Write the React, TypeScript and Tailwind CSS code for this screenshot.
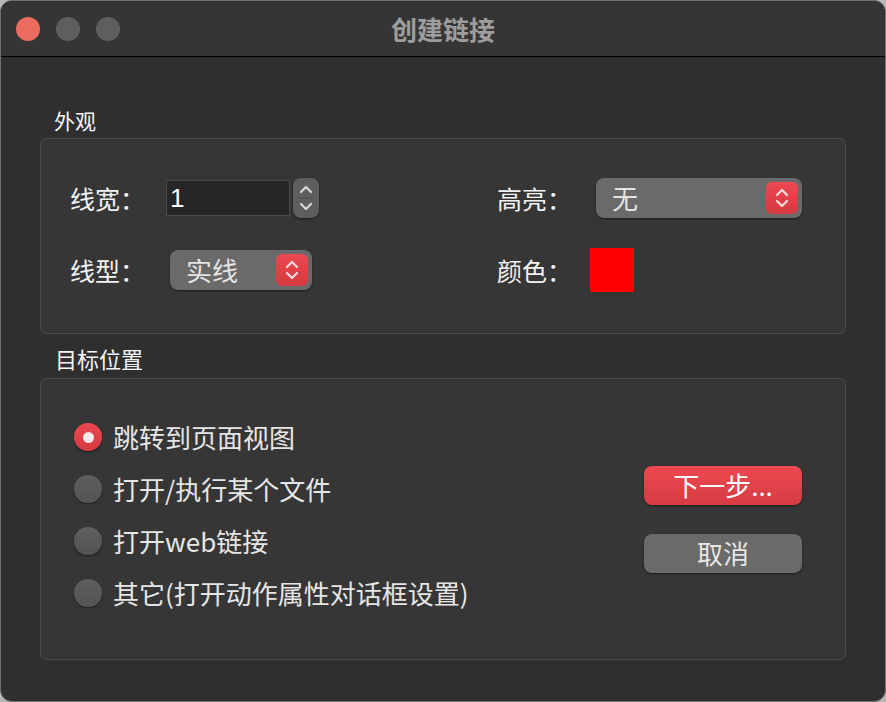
import React from 'react';

const font = { fontFamily: '"Noto Sans CJK SC", "Noto Sans", sans-serif' };

function Chevrons({ color = 'white' }: { color?: string }) {
  return (
    <svg width="16" height="24" viewBox="0 0 16 24" fill="none">
      <path d="M3 9 L8 4 L13 9" stroke={color} strokeWidth="2.2" strokeLinecap="round" strokeLinejoin="round" />
      <path d="M3 15 L8 20 L13 15" stroke={color} strokeWidth="2.2" strokeLinecap="round" strokeLinejoin="round" />
    </svg>
  );
}

function Popup({ label, width }: { label: string; width: string }) {
  return (
    <div className={`${width} h-[40px] rounded-[8px] bg-[#6a6a6a] shadow-[0_1px_2px_rgba(0,0,0,0.5)] flex items-center justify-between pl-[16px] pr-[4px]`}>
      <span className="text-[26px] leading-none text-[#e4e4e4]">{label}</span>
      <div className="w-[32px] h-[32px] rounded-[6px] bg-gradient-to-b from-[#ec4850] to-[#d43a41] flex items-center justify-center">
        <Chevrons color="#f6dcdc" />
      </div>
    </div>
  );
}

function Radio({ label, checked }: { label: string; checked?: boolean }) {
  return (
    <div className="h-[52px] flex items-center gap-[11px]">
      {checked ? (
        <div className="w-[28px] h-[28px] rounded-full bg-gradient-to-b from-[#ec4850] to-[#d43a41] shadow-[0_1px_2px_rgba(0,0,0,0.5)] flex items-center justify-center">
          <div className="w-[11px] h-[11px] rounded-full bg-[#fbe9e9]" />
        </div>
      ) : (
        <div className="w-[28px] h-[28px] rounded-full bg-gradient-to-b from-[#5f5f5f] to-[#535353] shadow-[0_1px_2px_rgba(0,0,0,0.5)]" />
      )}
      <span className="text-[26px] leading-none text-[#e6e6e6]">{label}</span>
    </div>
  );
}

export default function App() {
  return (
    <div className="w-[886px] h-[702px] bg-[#b8b8b8]" style={font}>
      <div className="h-full rounded-[12px] border border-[#707070] bg-[#2f2f2f] overflow-hidden flex flex-col">
        {/* title bar */}
        <div className="h-[56px] bg-[#353535] border-b border-black flex items-center">
          <div className="w-[140px] flex items-center gap-[16px] pl-[15px]">
            <div className="w-[24px] h-[24px] rounded-full bg-[#ed6a5e]" />
            <div className="w-[24px] h-[24px] rounded-full bg-[#5e5e5e]" />
            <div className="w-[24px] h-[24px] rounded-full bg-[#5e5e5e]" />
          </div>
          <div className="flex-1 text-center text-[26px] font-bold text-[#9d9d9d] leading-none">创建链接</div>
          <div className="w-[140px]" />
        </div>

        <div className="px-[39px] pt-[50px]">
          <div className="h-[26px] ml-[14px] text-[21px] leading-[26px] text-[#f4f4f4]">外观</div>
          <div className="mt-[5px] h-[196px] rounded-[6px] border border-[#4a4a4a] bg-[#363636] pt-[39px] pl-[29px]">
            <div className="flex items-center h-[40px]">
              <div className="w-[427px] flex items-center">
                <span className="w-[96px] text-[25px] leading-none text-[#f2f2f2]">线宽：</span>
                <div className="w-[124px] h-[36px] bg-[#262626] border border-[#4a4a4a] flex items-center pl-[3px]">
                  <span className="text-[26px] leading-none text-white" style={{ fontFamily: '"Liberation Sans", sans-serif' }}>1</span>
                </div>
                <div className="ml-[3px] w-[26px] h-[40px] rounded-[8px] bg-[#5e5e5e] shadow-[0_1px_2px_rgba(0,0,0,0.5)] flex flex-col items-center justify-center">
                  <svg width="16" height="34" viewBox="0 0 16 34" fill="none">
                    <path d="M3 11 L8 6 L13 11" stroke="#d8d8d8" strokeWidth="2.2" strokeLinecap="round" strokeLinejoin="round" />
                    <line x1="0" y1="17" x2="16" y2="17" stroke="#4c4c4c" strokeWidth="1" />
                    <path d="M3 23 L8 28 L13 23" stroke="#d8d8d8" strokeWidth="2.2" strokeLinecap="round" strokeLinejoin="round" />
                  </svg>
                </div>
              </div>
              <span className="w-[99px] text-[25px] leading-none text-[#f2f2f2]">高亮：</span>
              <Popup label="无" width="w-[206px]" />
            </div>
            <div className="flex items-center h-[44px] mt-[30px]">
              <div className="w-[427px] flex items-center">
                <span className="w-[100px] text-[25px] leading-none text-[#f2f2f2]">线型：</span>
                <Popup label="实线" width="w-[142px]" />
              </div>
              <span className="w-[93px] text-[25px] leading-none text-[#f2f2f2]">颜色：</span>
              <div className="w-[44px] h-[44px] bg-[#ff0000]" />
            </div>
          </div>

          <div className="mt-[11px] h-[26px] ml-[15px] text-[22px] leading-[26px] text-[#f4f4f4]">目标位置</div>
          <div className="mt-[7px] h-[282px] rounded-[6px] border border-[#4a4a4a] bg-[#363636] flex justify-between items-start pl-[33px] pr-[43px]">
            <div className="pt-[32px] flex flex-col">
              <Radio label="跳转到页面视图" checked />
              <Radio label="打开/执行某个文件" />
              <Radio label="打开web链接" />
              <Radio label="其它(打开动作属性对话框设置)" />
            </div>
            <div className="self-center flex flex-col gap-[29px]">
              <button className="w-[158px] h-[39px] rounded-[8px] bg-gradient-to-b from-[#ef4850] to-[#d63b42] shadow-[0_1px_2px_rgba(0,0,0,0.5)] text-[26px] leading-none text-white">
                下一步...
              </button>
              <button className="w-[158px] h-[39px] rounded-[8px] bg-[#6a6a6a] shadow-[0_1px_2px_rgba(0,0,0,0.5)] text-[26px] leading-none text-[#e6e6e6]">
                取消
              </button>
            </div>
          </div>
        </div>
      </div>
    </div>
  );
}
